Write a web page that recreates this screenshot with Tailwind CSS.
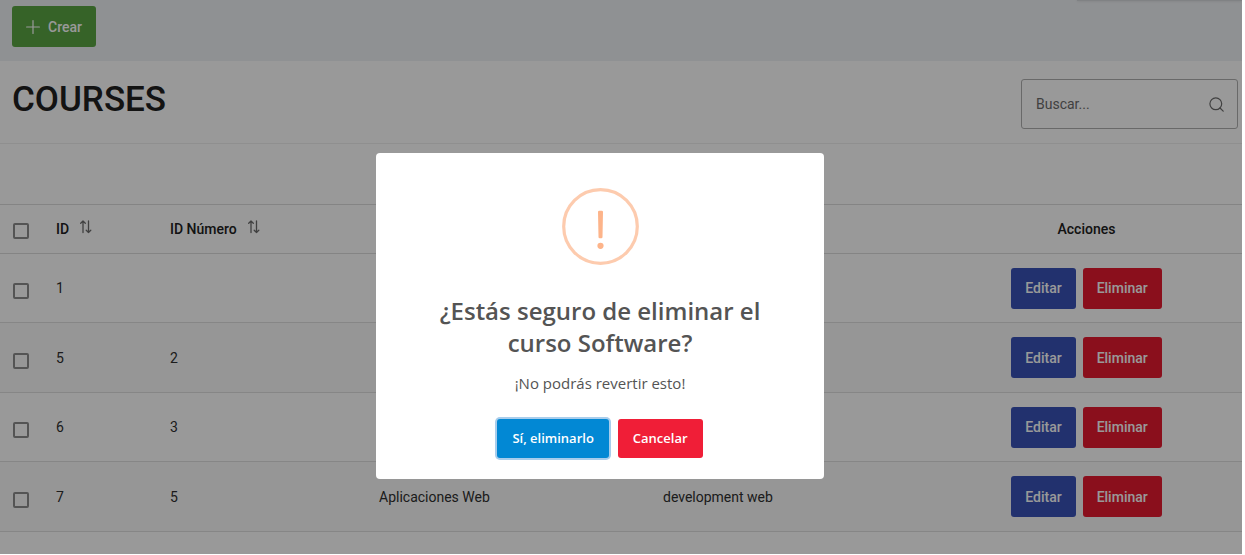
<!DOCTYPE html>
<html lang="es">
<head>
<meta charset="utf-8">
<meta name="viewport" content="width=device-width, initial-scale=1">
<title>Courses</title>
<script src="https://cdn.jsdelivr.net/npm/@tailwindcss/browser@4"></script>
</head>
<body class="min-h-screen bg-white pr-[3px] pb-px flex flex-col font-['Roboto',sans-serif] text-sm text-[#212121]">
<div class="relative flex-1 overflow-hidden bg-white">
  <div class="absolute top-0 right-0 h-px w-[165px] bg-black/10 shadow-[0_0_3px_rgba(0,0,0,0.2)]"></div>
  <header class="bg-[#eff2f5] px-3 pt-1.5 pb-3.5">
    <button type="button" class="flex h-[41px] items-center gap-2 rounded-[3px] bg-[#5aa644] px-3.5 font-medium text-white">
      <svg class="size-3.5" viewBox="0 0 14 14" fill="none" stroke="currentColor" stroke-width="1.2" stroke-linecap="round" aria-hidden="true"><path d="M7 .6v12.800M.6 7h12.800"/></svg>
      Crear
    </button>
  </header>
  <main>
    <div class="flex items-start justify-between border-b border-[#eeeeee] pt-[18px] pr-1 pb-3.5 pl-3">
      <h1 class="text-[35px] leading-[42px] font-medium">COURSES</h1>
      <div class="flex h-[50px] w-[217px] items-center rounded-[3px] border border-[#b0b0b0] pr-[13px] pl-3.5">
        <input type="search" aria-label="Buscar" placeholder="Buscar..." class="min-w-0 flex-1 bg-transparent outline-none placeholder:text-[#6c6c6c]">
        <svg class="size-[15px] text-[#6c6c6c]" viewBox="0 0 15 15" fill="none" stroke="currentColor" stroke-width="1.2" stroke-linecap="round" aria-hidden="true"><circle cx="6.800" cy="6.800" r="5.900"/><path d="M11 11l3.200 3.200"/></svg>
      </div>
    </div>
    <div class="h-[60px]"></div>
    <table class="w-full table-fixed border-separate border-spacing-0 border-t border-[#dcdcdc] text-left">
      <colgroup><col class="w-[43px]"><col class="w-[114px]"><col class="w-[209px]"><col class="w-[284px]"><col class="w-[281px]"><col></colgroup>
      <thead>
        <tr class="h-[49px] *:border-b *:border-[#dcdcdc] *:px-[13px] *:font-medium">
          <th class="pt-1"><input type="checkbox" aria-label="Seleccionar todo" class="block size-4 appearance-none rounded-[2px] border-2 border-[#8c8c8c]"></th>
          <th><span class="flex items-center gap-2.5">ID
            <svg class="size-3.5 -translate-y-0.5 text-[#6c6c6c]" viewBox="0 0 14 14" fill="none" stroke="currentColor" stroke-width="1.3" stroke-linecap="round" stroke-linejoin="round" aria-hidden="true"><path d="M4 12.500V1M1.700 3.200L4 1l2.300 2.200M9.500 1v11.500M7.200 10.300l2.300 2.200 2.300-2.200"/></svg></span></th>
          <th><span class="flex items-center gap-2.5">ID Número
            <svg class="size-3.5 -translate-y-0.5 text-[#6c6c6c]" viewBox="0 0 14 14" fill="none" stroke="currentColor" stroke-width="1.3" stroke-linecap="round" stroke-linejoin="round" aria-hidden="true"><path d="M4 12.500V1M1.700 3.200L4 1l2.300 2.200M9.500 1v11.500M7.200 10.300l2.300 2.200 2.300-2.200"/></svg></span></th>
          <th></th>
          <th></th>
          <th class="text-center">Acciones</th>
        </tr>
      </thead>
      <tbody class="text-[#2f2f2f] *:*:border-b *:*:border-[#e0e0e0] *:*:px-[13px]">
        <tr class="h-[69px]">
          <td class="pt-1.5"><input type="checkbox" aria-label="Seleccionar curso 1" class="block size-4 appearance-none rounded-[2px] border-2 border-[#8c8c8c]"></td>
          <td>1</td><td></td><td></td><td></td>
          <td><div class="flex justify-center gap-[7px] font-medium text-white"><button type="button" class="h-[41px] rounded-[3px] bg-[#3a53b8] px-3.5">Editar</button><button type="button" class="h-[41px] rounded-[3px] bg-[#e61a30] px-3.5">Eliminar</button></div></td>
        </tr>
        <tr class="h-[70px] bg-[#fafafa]">
          <td class="pt-1.5"><input type="checkbox" aria-label="Seleccionar curso 5" class="block size-4 appearance-none rounded-[2px] border-2 border-[#8c8c8c]"></td>
          <td>5</td><td>2</td><td></td><td></td>
          <td><div class="flex justify-center gap-[7px] font-medium text-white"><button type="button" class="h-[41px] rounded-[3px] bg-[#3a53b8] px-3.5">Editar</button><button type="button" class="h-[41px] rounded-[3px] bg-[#e61a30] px-3.5">Eliminar</button></div></td>
        </tr>
        <tr class="h-[69px]">
          <td class="pt-1.5"><input type="checkbox" aria-label="Seleccionar curso 6" class="block size-4 appearance-none rounded-[2px] border-2 border-[#8c8c8c]"></td>
          <td>6</td><td>3</td><td></td><td></td>
          <td><div class="flex justify-center gap-[7px] font-medium text-white"><button type="button" class="h-[41px] rounded-[3px] bg-[#3a53b8] px-3.5">Editar</button><button type="button" class="h-[41px] rounded-[3px] bg-[#e61a30] px-3.5">Eliminar</button></div></td>
        </tr>
        <tr class="h-[70px] bg-[#fafafa]">
          <td class="pt-1.5"><input type="checkbox" aria-label="Seleccionar curso 7" class="block size-4 appearance-none rounded-[2px] border-2 border-[#8c8c8c]"></td>
          <td>7</td><td>5</td><td>Aplicaciones Web</td><td>development web</td>
          <td><div class="flex justify-center gap-[7px] font-medium text-white"><button type="button" class="h-[41px] rounded-[3px] bg-[#3a53b8] px-3.5">Editar</button><button type="button" class="h-[41px] rounded-[3px] bg-[#e61a30] px-3.5">Eliminar</button></div></td>
        </tr>
      </tbody>
    </table>
  </main>
  <div class="absolute inset-0 flex items-center justify-center bg-black/40 pt-[78px] pr-[42px]">
    <div role="dialog" aria-modal="true" aria-labelledby="dlg-title" class="flex w-[448px] flex-col items-center rounded-[4px] bg-white pt-[35px] pb-[21px] text-center font-['Open_Sans','Noto_Sans',sans-serif] text-[#545454]">
      <svg class="size-[77px]" viewBox="0 0 77 77" aria-hidden="true"><circle cx="38.500" cy="38.500" r="36.800" fill="none" stroke="#fdcbae" stroke-width="3.200"/><path d="M36 24q0-1.200 1.200-1.200h2.600q1.200 0 1.200 1.200l-.5 25q0 1.200-1.200 1.200h-1.600q-1.200 0-1.200-1.200z" fill="#fdb48a"/><circle cx="38.500" cy="57.800" r="3.100" fill="#fdb48a"/></svg>
      <h2 id="dlg-title" class="mt-[30px] px-10 text-2xl leading-8 font-semibold">¿Estás seguro de eliminar el curso Software?</h2>
      <p class="mt-3 text-[15px] leading-6">¡No podrás revertir esto!</p>
      <div class="mt-6 flex gap-[9px] text-[13px] font-semibold text-white">
        <button type="button" class="h-[39px] rounded-[3px] bg-[#0288d4] px-[15px] ring-2 ring-[#a8cdec]">Sí, eliminarlo</button>
        <button type="button" class="h-[39px] rounded-[3px] bg-[#f01e37] px-[15px]">Cancelar</button>
      </div>
    </div>
  </div>
</div>
</body>
</html>
